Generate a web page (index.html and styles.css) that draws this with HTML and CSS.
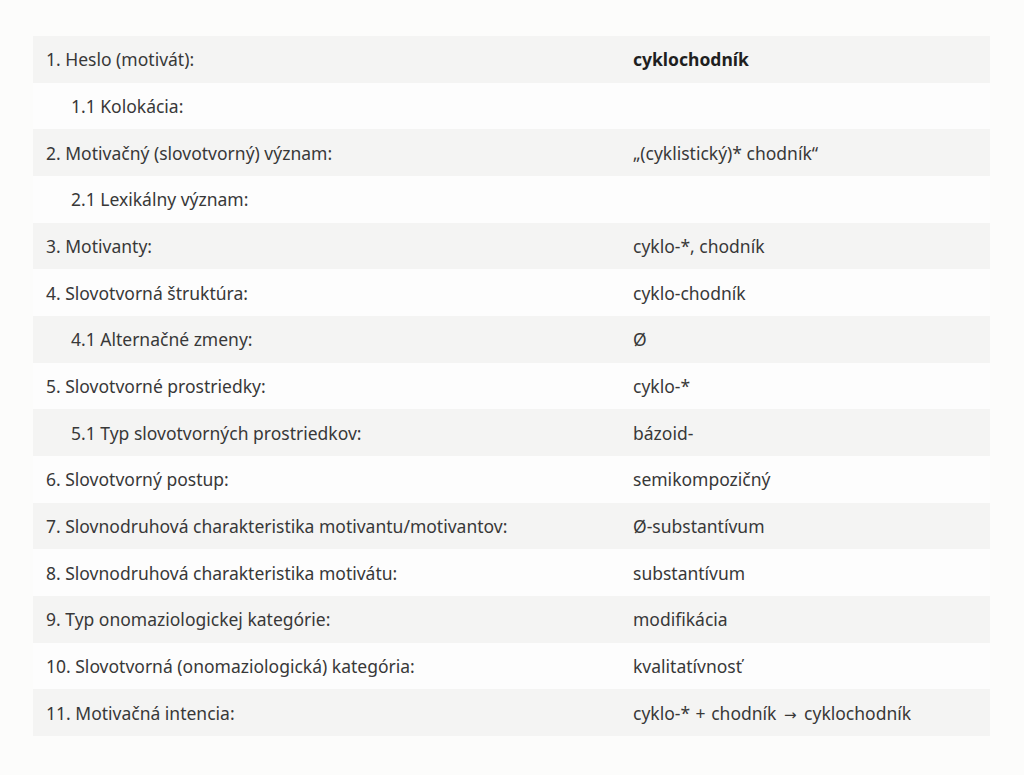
FILE: index.html
```html
<!DOCTYPE html>
<html lang="sk">
<head>
<meta charset="utf-8">
<title>cyklochodník</title>
<link rel="stylesheet" href="styles.css">
</head>
<body>
<main class="page">
  <div class="table">
    <div class="row alt"><div class="label">1. Heslo (motivát):</div><div class="value strong">cyklochodník</div></div>
    <div class="row"><div class="label sub">1.1 Kolokácia:</div><div class="value"></div></div>
    <div class="row alt"><div class="label">2. Motivačný (slovotvorný) význam:</div><div class="value">„(cyklistický)* chodník“</div></div>
    <div class="row"><div class="label sub">2.1 Lexikálny význam:</div><div class="value"></div></div>
    <div class="row alt"><div class="label">3. Motivanty:</div><div class="value">cyklo-*, chodník</div></div>
    <div class="row"><div class="label">4. Slovotvorná štruktúra:</div><div class="value">cyklo-chodník</div></div>
    <div class="row alt"><div class="label sub">4.1 Alternačné zmeny:</div><div class="value">Ø</div></div>
    <div class="row"><div class="label">5. Slovotvorné prostriedky:</div><div class="value">cyklo-*</div></div>
    <div class="row alt"><div class="label sub">5.1 Typ slovotvorných prostriedkov:</div><div class="value">bázoid-</div></div>
    <div class="row"><div class="label">6. Slovotvorný postup:</div><div class="value">semikompozičný</div></div>
    <div class="row alt"><div class="label">7. Slovnodruhová charakteristika motivantu/motivantov:</div><div class="value">Ø-substantívum</div></div>
    <div class="row"><div class="label">8. Slovnodruhová charakteristika motivátu:</div><div class="value">substantívum</div></div>
    <div class="row alt"><div class="label">9. Typ onomaziologickej kategórie:</div><div class="value">modifikácia</div></div>
    <div class="row"><div class="label">10. Slovotvorná (onomaziologická) kategória:</div><div class="value">kvalitatívnosť</div></div>
    <div class="row alt"><div class="label">11. Motivačná intencia:</div><div class="value">cyklo-* <span class="op">+</span> chodník <span class="op arrow">→</span> cyklochodník</div></div>
  </div>
</main>
</body>
</html>
```
FILE: styles.css
```css
html, body {
  margin: 0;
  padding: 0;
  background: #fcfcfb;
}
body {
  font-family: "Noto Sans", "Open Sans", sans-serif;
  font-size: 17.5px;
  color: #383838;
}
.page {
  padding: 36px 34px 39px 33px;
}
.table {
  display: flex;
  flex-direction: column;
}
.row {
  display: flex;
  align-items: center;
  height: 46.67px;
  background: #fdfdfd;
}
.row.alt {
  background: #f4f4f3;
}
.label {
  width: 587px;
  padding-left: 13px;
  box-sizing: border-box;
  flex: none;
}
.label.sub {
  padding-left: 38px;
}
.value {
  padding-left: 13px;
  flex: 1;
}
.strong {
  font-weight: 700;
  color: #1f1f1f;
}
.op {
  margin: 0 1px;
}
.arrow {
  font-family: "DejaVu Sans", sans-serif;
  font-size: 15px;
  margin: 0 3px;
}
```
